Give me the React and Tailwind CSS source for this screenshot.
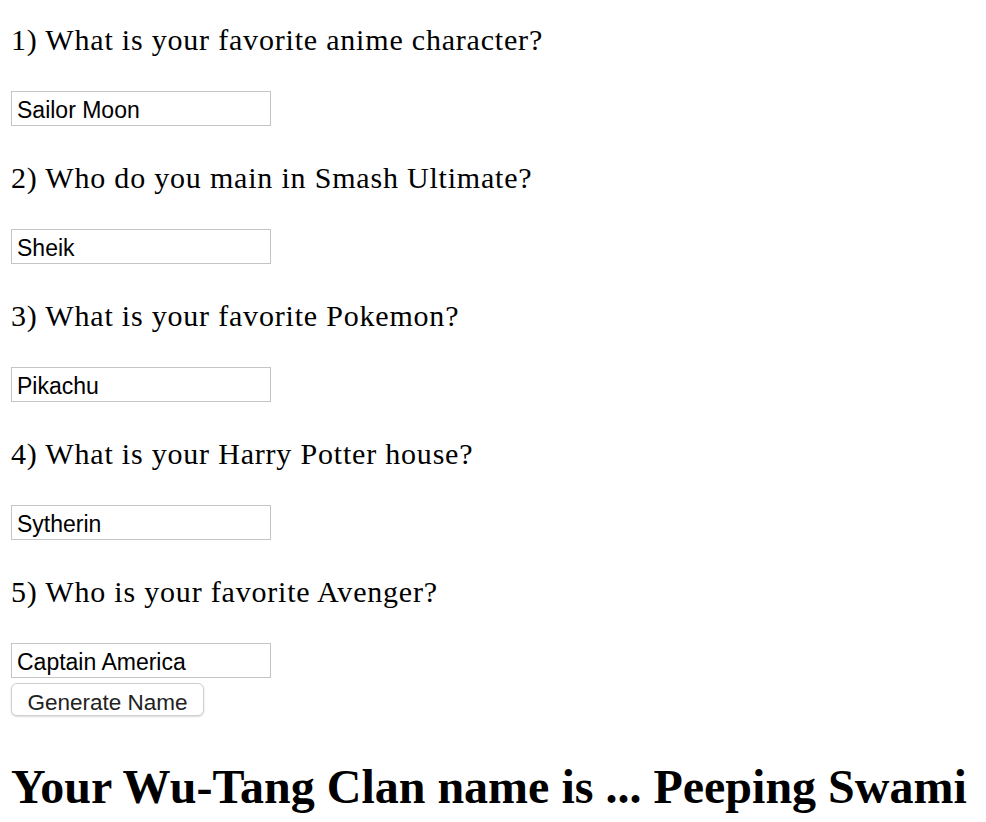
import React, {useState} from "react";

const questions = [
    {q: "1) What is your favorite anime character?", a: "Sailor Moon"},
    {q: "2) Who do you main in Smash Ultimate?", a: "Sheik"},
    {q: "3) What is your favorite Pokemon?", a: "Pikachu"},
    {q: "4) What is your Harry Potter house?", a: "Sytherin"},
    {q: "5) Who is your favorite Avenger?", a: "Captain America"},
];

export default function App() {
    const [answers, setAnswers] = useState(questions.map((x) => x.a));

    return (
        <div className="min-h-screen bg-white px-[11px] text-black font-['Liberation_Serif',serif]">
            {questions.map((item, i) => (
                <div key={i} className="flex flex-col items-start">
                    <p className={`${i === 0 ? "mt-[23px]" : "mt-[35px]"} text-[30px] leading-[34px] tracking-[0.8px]`}>
                        {item.q}
                    </p>
                    <input
                        type="text"
                        value={answers[i]}
                        onChange={(e) => {
                            const next = [...answers];
                            next[i] = e.target.value;
                            setAnswers(next);
                        }}
                        className="mt-[34px] h-[35px] w-[260px] border border-[#c4c4c4] bg-white px-[5px] pt-[3px] text-[23px] text-black outline-none font-['Liberation_Sans',Arial,sans-serif]"
                    />
                </div>
            ))}

            {/* 버튼 */}
            <button className="mt-[5px] block h-[33px] w-[193px] rounded-[6px] border border-[#cfcfcf] bg-white pt-[2px] text-[22.5px] text-[#222] shadow-[0_1px_2px_rgba(0,0,0,0.15)] font-['Liberation_Sans',Arial,sans-serif]">
                Generate Name
            </button>

            <h1 className="mt-[43px] text-[48px] font-bold leading-[56px] whitespace-nowrap">
                Your Wu-Tang Clan name is ... Peeping Swami
            </h1>
        </div>
    );
}
